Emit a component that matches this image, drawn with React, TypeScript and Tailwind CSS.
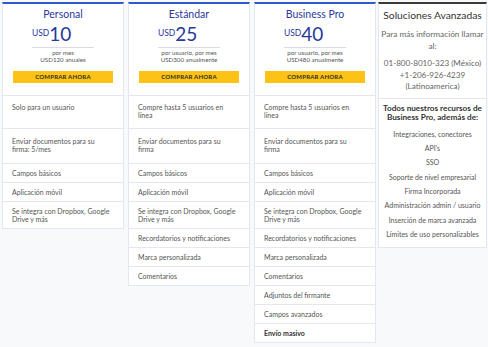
import React from "react";

type Feature = { text: string; bold?: boolean };
type Plan = {
  title: string;
  price: string;
  line1: string;
  line2: string;
  features: Feature[];
};

const base: Feature[] = [
  { text: "Enviar documentos para su firma" },
  { text: "Campos básicos" },
  { text: "Aplicación móvil" },
  { text: "Se integra con Dropbox, Google Drive y más" },
];

const plans: Plan[] = [
  {
    title: "Personal",
    price: "10",
    line1: "por mes",
    line2: "USD120 anuales",
    features: [
      { text: "Solo para un usuario" },
      { text: "Enviar documentos para su firma: 5/mes" },
      ...base.slice(1),
    ],
  },
  {
    title: "Estándar",
    price: "25",
    line1: "por usuario, por mes",
    line2: "USD300 anualmente",
    features: [
      { text: "Compre hasta 5 usuarios en línea" },
      ...base,
      { text: "Recordatorios y notificaciones" },
      { text: "Marca personalizada" },
      { text: "Comentarios" },
    ],
  },
  {
    title: "Business Pro",
    price: "40",
    line1: "por usuario, por mes",
    line2: "USD480 anualmente",
    features: [
      { text: "Compre hasta 5 usuarios en línea" },
      ...base,
      { text: "Recordatorios y notificaciones" },
      { text: "Marca personalizada" },
      { text: "Comentarios" },
      { text: "Adjuntos del firmante" },
      { text: "Campos avanzados" },
      { text: "Envío masivo", bold: true },
    ],
  },
];

const extras = [
  "Integraciones, conectores",
  "API's",
  "SSO",
  "Soporte de nivel empresarial",
  "Firma Incorporada",
  "Administración admin / usuario",
  "Inserción de marca avanzada",
  "Límites de uso personalizables",
];

function PlanCard({ plan }: { plan: Plan }) {
  return (
    <div className="w-[122px] shrink-0 bg-white border border-[#e3e7ef] border-t-2 border-t-[#2f5bce]">
      <div className="h-[91px] flex flex-col items-center">
        <div className="mt-[4px] text-[10.5px] leading-[13px] text-[#28399b]">{plan.title}</div>
        <div className="mt-[2.5px] w-[62px] border-b border-[#d9dce3] flex items-start pb-[3px]">
          <span className="mt-[4.4px] text-[8.5px] leading-[10px] text-[#28399b]">USD</span>
          <span className="text-[19px] leading-[20px] text-[#28399b]">{plan.price}</span>
        </div>
        <div className="mt-[1px] text-[6.2px] leading-[7px] text-[#555] text-center">
          <div>{plan.line1}</div>
          <div>{plan.line2}</div>
        </div>
        <div className="mt-[8px] w-[100px] h-[12px] bg-[#fcc316] flex items-center justify-center text-[6px] font-bold tracking-[0.2px] text-[#2b2b2b]">
          COMPRAR AHORA
        </div>
      </div>
      {plan.features.map((f, i) => (
        <div
          key={i}
          className={
            "border-t border-[#e3e7ef] pl-[9px] pr-[12px] pt-[5px] pb-[5px] text-[7px] leading-[8px] " +
            (f.bold ? "font-bold text-[#333] " : "text-[#555] ") +
            (i === 0 ? "h-[33px] pt-[7px]" : i === 1 ? "h-[35px] pt-[8px]" : "")
          }
        >
          {f.text}
        </div>
      ))}
    </div>
  );
}

export default function App() {
  return (
    <div
      className="w-[488px] h-[347px] bg-[#f8f9fb] flex items-start gap-[4px] pl-[2px] pt-[2px]"
      style={{ fontFamily: "Lato, 'Noto Sans', sans-serif" }}
    >
      <PlanCard plan={plans[0]} />
      <PlanCard plan={plans[1]} />
      <PlanCard plan={plans[2]} />
      <div className="w-[109px] ml-[-2px] shrink-0 bg-white border border-[#e3e7ef] border-t-2 border-t-[#3a3a3a] text-center">
        <div className="h-[94px] flex flex-col items-center">
          <div className="mt-[4.5px] text-[10.3px] leading-[13px] text-[#333] whitespace-nowrap">Soluciones Avanzadas</div>
          <div className="mt-[6.5px] text-[8.3px] leading-[12px] text-[#666] whitespace-nowrap">
            Para más información llamar
            <br />
            al:
          </div>
          <div className="mt-[6px] text-[8.1px] leading-[11.5px] text-[#666] whitespace-nowrap">
            <div>01-800-8010-323 (México)</div>
            <div>+1-206-926-4239</div>
            <div>(Latinoamerica)</div>
          </div>
        </div>
        <div className="border-t border-[#e3e7ef] pt-[4.5px] pb-[6px]">
          <div className="text-[8.2px] leading-[9px] font-bold text-[#333] whitespace-nowrap">
            Todos nuestros recursos de
            <br />
            Business Pro, además de:
          </div>
          <div className="mt-[5.3px] flex flex-col">
            {extras.map((e) => (
              <div key={e} className="text-[7px] leading-[14.3px] text-[#555] whitespace-nowrap">
                {e}
              </div>
            ))}
          </div>
        </div>
      </div>
    </div>
  );
}
